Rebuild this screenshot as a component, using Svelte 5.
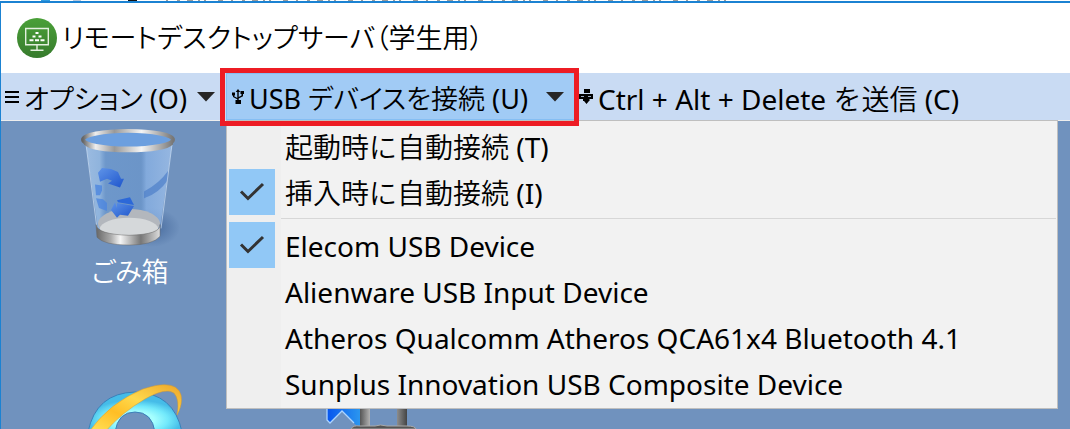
<script lang="ts">
  let settings = $state([
    { label: '起動時に自動接続 (T)', checked: false },
    { label: '挿入時に自動接続 (I)', checked: true }
  ]);
  let devices = $state([
    { label: 'Elecom USB Device', checked: true },
    { label: 'Alienware USB Input Device', checked: false },
    { label: 'Atheros Qualcomm Atheros QCA61x4 Bluetooth 4.1', checked: false },
    { label: 'Sunplus Innovation USB Composite Device', checked: false }
  ]);
</script>

{#snippet item(entry)}
  <label class="item">
    <span class="tick">
      <input type="checkbox" bind:checked={entry.checked} />
      {#if entry.checked}
        <svg width="26" height="20" viewBox="0 0 26 20" aria-hidden="true">
          <path d="M2 9.5 9 16.5 24 2" fill="none" stroke="#333" stroke-width="3" />
        </svg>
      {/if}
    </span>
    <span class="item-text">{entry.label}</span>
  </label>
{/snippet}

<div class="screen">
  <div class="behind">
    <svg width="740" height="1" viewBox="0 0 740 1" aria-hidden="true">
      <path d="M41 .5h9" stroke="#2f9be0" /><path d="M73 .5h8" stroke="#b7c7dc" /><path d="M128 .5h9" stroke="#111" />
      <path d="M166 .5H735" stroke="#9a9a9a" stroke-dasharray="2 9 3 7 6 5 2 4 2 12 5 8" />
    </svg>
  </div>
  <div class="window">
    <header class="title">
      <svg width="40" height="40" viewBox="0 0 40 40" aria-hidden="true">
        <defs>
          <linearGradient id="green" x2="0" y2="1"><stop stop-color="#4aa038" /><stop offset="1" stop-color="#377b2d" /></linearGradient>
        </defs>
        <circle cx="20" cy="20" r="20" fill="url(#green)" />
        <g fill="none" stroke="#e4f0df" stroke-width="1.4">
          <path d="M8.7 10.5h22.6v16.3H8.7zM20 27v5M13.5 32.3h13" />
        </g>
        <path d="M18.5 14h3v2h-3zM15.5 17.6h3v2h-3zM21.5 17.6h3v2h-3zM12.5 21.2h4v2h-4zM18 21.2h4v2h-4zM23.5 21.2h4v2h-4z" fill="#fff" />
      </svg>
      <h1>リモートデスクトップサーバ（学生用）</h1>
    </header>

    <nav class="bar">
      <button class="tool options">
        <svg width="14" height="12" viewBox="0 0 14 12" aria-hidden="true"><path d="M0 0h14v2H0zM0 5h14v2H0zM0 10h14v2H0z" fill="#000" /></svg>
        <span>オプション (O)</span>
        <svg class="arrow" width="18" height="10" viewBox="0 0 18 10" aria-hidden="true"><path d="M0 0h18L9 9.5z" fill="#262626" /></svg>
      </button>

      <div class="usb-wrap">
        <button class="tool usb" aria-expanded="true">
          <svg width="12" height="16" viewBox="0 0 12 16" aria-hidden="true">
            <path d="M6 0 8.300 3H6.700v5L9.500 6.500V5H8.500V2H12v3h-1v2.300L6.700 9.500V11H9v4H3.500v-4h1.800v-.8L1 8V6.500H0V3.500h3v3h-.8v.8L5.300 9V3H3.700z" fill="#000" />
          </svg>
          <span>USB デバイスを接続 (U)</span>
          <svg class="arrow" width="18" height="10" viewBox="0 0 18 10" aria-hidden="true"><path d="M0 0h18L9 9.5z" fill="#262626" /></svg>
        </button>
        <div class="menu">
          {#each settings as entry}{@render item(entry)}{/each}
          <hr />
          {#each devices as entry}{@render item(entry)}{/each}
        </div>
        <div class="mark"></div>
      </div>

      <button class="tool send">
        <svg width="14" height="15" viewBox="0 0 14 15" aria-hidden="true">
          <path d="M5 0h6v4H5zM0 5h14v5h-3.500v2H10l-2.500 3L5 12H4v-2H0z" fill="#000" /><path d="M2 7.500h3M9 7.500h3" stroke="#9aabc4" stroke-width="1" />
        </svg>
        <span>Ctrl + Alt + Delete を送信 (C)</span>
      </button>
    </nav>

    <main class="desktop">
      <div class="shortcuts">
        <a class="shortcut" href="#trash">
          <svg width="100" height="121" viewBox="0 0 100 124" preserveAspectRatio="none" aria-hidden="true">
            <defs>
              <linearGradient id="rim"><stop stop-color="#666" /><stop offset=".14" stop-color="#eee" /><stop offset=".35" stop-color="#999" /><stop offset=".65" stop-color="#f5f5f5" /><stop offset="1" stop-color="#777" /></linearGradient>
              <linearGradient id="base"><stop stop-color="#666" /><stop offset=".23" stop-color="#aaa" /><stop offset=".38" stop-color="#f5f5f5" /><stop offset=".7" stop-color="#777" /><stop offset="1" stop-color="#ddd" /></linearGradient>
              <linearGradient id="glass"><stop stop-color="#b9d7f8" stop-opacity=".7" /><stop offset=".16" stop-color="#a9cff6" stop-opacity=".65" /><stop offset=".23" stop-color="#6a9edb" stop-opacity=".5" /><stop offset=".64" stop-color="#6699d6" stop-opacity=".5" /><stop offset=".7" stop-color="#8fbaf0" stop-opacity=".7" /><stop offset="1" stop-color="#a7c8f1" stop-opacity=".8" /></linearGradient>
              <linearGradient id="blue" x2="1" y2="1"><stop stop-color="#5f94e8" /><stop offset="1" stop-color="#1e55cc" /></linearGradient>
              <radialGradient id="shade"><stop stop-color="#35598f" stop-opacity=".7" /><stop offset="1" stop-color="#35598f" stop-opacity="0" /></radialGradient>
            </defs>
            <ellipse cx="72" cy="103" rx="28" ry="20" fill="url(#shade)" />
            <ellipse cx="49" cy="12" rx="44" ry="9" fill="#6c9fdf" />
            <path d="M6 18Q49 31 92 18L80 104Q49 119 18 104z" fill="url(#glass)" opacity=".85" />
            <ellipse cx="49" cy="99" rx="31" ry="15" fill="#b3b7bd" /><ellipse cx="49" cy="104" rx="29" ry="11" fill="#d5d8da" />
            <path d="M64 66Q79 58 88 45v9Q79 68 64 73z" fill="#4d7fc9" opacity=".7" />
            <path d="M6 18 17 104M92 18 81 104" stroke="#cfe2f7" stroke-width="1" opacity=".7" />
            <path d="M18 47 22 42 31 43 38 46 41 53 44 53 40 62 28 58 32 55 27 53 20 56z" fill="url(#blue)" />
            <path d="M37 75 50 72 54 80 38 77z" fill="#2c68d8" /><path d="M37 78 54 81 48 91 40 90 37 93 31 85 35 77 37 83z" fill="url(#blue)" />
            <path d="M15 59 22 60 22 65 20 70 16 70z" fill="#4c86df" opacity=".8" />
            <path d="M16 73 23 74 27 78 27 86 19 83z" fill="#4c86df" opacity=".8" />
            <path d="M16 100Q17 110 49 111 81 110 80 100V112Q73 121 49 121 24 121 17 113z" fill="url(#base)" stroke="#666" stroke-width=".5" />
            <ellipse cx="48" cy="13" rx="45" ry="9" fill="none" stroke="url(#rim)" stroke-width="4" />
            <path d="M3 13Q12 21 48 21T93 13v5Q85 26 48 26T4 18z" fill="url(#rim)" />
          </svg>
          <span>ごみ箱</span>
        </a>
        <a class="shortcut browser" href="#browser" aria-label="Internet Explorer">
          <svg width="100" height="46" viewBox="0 0 100 46" aria-hidden="true">
            <defs>
              <radialGradient id="cyan" cx=".5" cy=".7"><stop offset=".4" stop-color="#a6ffff" /><stop offset=".7" stop-color="#72e9fb" /><stop offset="1" stop-color="#45bce8" /></radialGradient>
              <linearGradient id="gold" x1="0" y1="1" x2="1" y2="0"><stop stop-color="#ffe45c" /><stop offset=".35" stop-color="#ffbe25" /><stop offset=".6" stop-color="#ffd94d" /><stop offset="1" stop-color="#eda528" /></linearGradient>
            </defs>
            <path d="M2 48Q10 9 49 8 88 9 96 48H69Q66 28 49 28T29 48z" fill="url(#cyan)" stroke="#3a80ba" />
            <path d="M3 48Q23 19 57 5 90-6 95 11 97 20 91 31 94 16 88 9 80 3 59 15 35 29 19 48z" fill="url(#gold)" stroke="#d99a2b" stroke-width=".5" />
          </svg>
        </a>
      </div>
      <svg class="tools-icon" width="100" height="20" viewBox="0 0 100 20" aria-hidden="true">
        <defs>
          <linearGradient id="post"><stop stop-color="#555" /><stop offset=".35" stop-color="#eee" /><stop offset=".7" stop-color="#aaa" /><stop offset="1" stop-color="#444" /></linearGradient>
          <linearGradient id="flag"><stop stop-color="#0755ee" /><stop offset="1" stop-color="#2b96ef" /></linearGradient>
        </defs>
        <path d="M5 0h33v20L20 2 8 14 5 11z" fill="url(#flag)" /><path d="M5 0v11l3 3L20 2 32 14" fill="none" stroke="#acd4ff" stroke-width="1.300" />
        <path d="M38 0h10v20H38zM75 0h10v20H75z" fill="url(#post)" />
        <path d="M29 20q2-4 9-3h15q5-2 12 0h20q8 0 9 3z" fill="#555" stroke="#aaa" />
      </svg>
    </main>
  </div>
</div>

<style>
  :global(body) { margin: 0; background: #7092be; }
  .screen { min-height: 100vh; box-sizing: border-box; display: flex; flex-direction: column; overflow: hidden; color: #000; font-family: "Noto Sans", "Noto Sans CJK JP DemiLight", "Noto Sans CJK JP", sans-serif; font-size: 27px; font-weight: 400; font-feature-settings: "palt"; }
  svg { display: block; flex: none; }
  .behind { height: 1px; background: #fff; }
  .window { flex: 1; display: flex; flex-direction: column; border-top: 2px solid #1b82d2; border-left: 1px solid #1b82d2; }
  .title { height: 70px; display: flex; align-items: center; gap: 5px; padding-left: 16px; background: #fff; }
  h1 { margin: 0; font-size: 27px; line-height: 40px; font-weight: 300; white-space: nowrap; }
  .bar { display: flex; height: 47px; background: #c9dbf3; border-bottom: 1px solid #eee; }
  .tool { display: flex; align-items: center; height: 47px; gap: 5px; padding: 0 4px; border: 0; background: none; color: inherit; font: inherit; font-feature-settings: inherit; white-space: nowrap; }
  .tool span { line-height: 40px; padding-top: 4px; }
  .arrow { margin-left: auto; }
  .options { width: 225px; padding-right: 11px; }
  .usb-wrap { position: relative; }
  .usb { width: 349px; padding: 0 10px 0 5px; background: #a1cbf5; border: 1px solid #85bef3; }
  .send { font-size: 28px; font-feature-settings: normal; }
  .menu { position: absolute; top: 47px; left: 0; display: flex; flex-direction: column; padding: 2px 96px 2px 0; border: 1px solid #bfbfbf; background: linear-gradient(90deg, #efefef 54px, #f2f2f2 54px); white-space: nowrap; font-size: 28px; font-feature-settings: normal; }
  .item { display: flex; height: 46px; align-items: center; gap: 10px; padding-left: 2px; }
  .tick { position: relative; width: 46px; height: 46px; display: grid; place-items: center; }
  .tick input { appearance: none; grid-area: 1 / 1; width: 46px; height: 46px; margin: 0; }
  .tick input:checked { background: #91c8f6; }
  .tick svg { grid-area: 1 / 1; pointer-events: none; z-index: 1; }
  .item-text { line-height: 40px; padding-top: 2px; }
  hr { margin: 3px -95px 3px 54px; width: auto; border: 0; border-top: 1px solid #d7d7d7; }
  .mark { position: absolute; inset: -5px -4px -6px -6px; border: 5px solid #ed1c24; pointer-events: none; }
  .desktop { flex: 1; display: flex; background: #7092be; min-height: 308px; max-height: 308px; overflow: hidden; }
  .shortcuts { display: flex; flex-direction: column; width: 240px; padding: 6px 0 0 79px; box-sizing: border-box; }
  .shortcut { display: flex; flex-direction: column; width: 100px; align-items: center; color: #fff; text-decoration: none; }
  .shortcut span { line-height: 40px; padding-top: 4px; }
  .browser { margin-top: 92px; padding-left: 6px; }
  .tools-icon { align-self: flex-end; margin-left: 81px; }
</style>
